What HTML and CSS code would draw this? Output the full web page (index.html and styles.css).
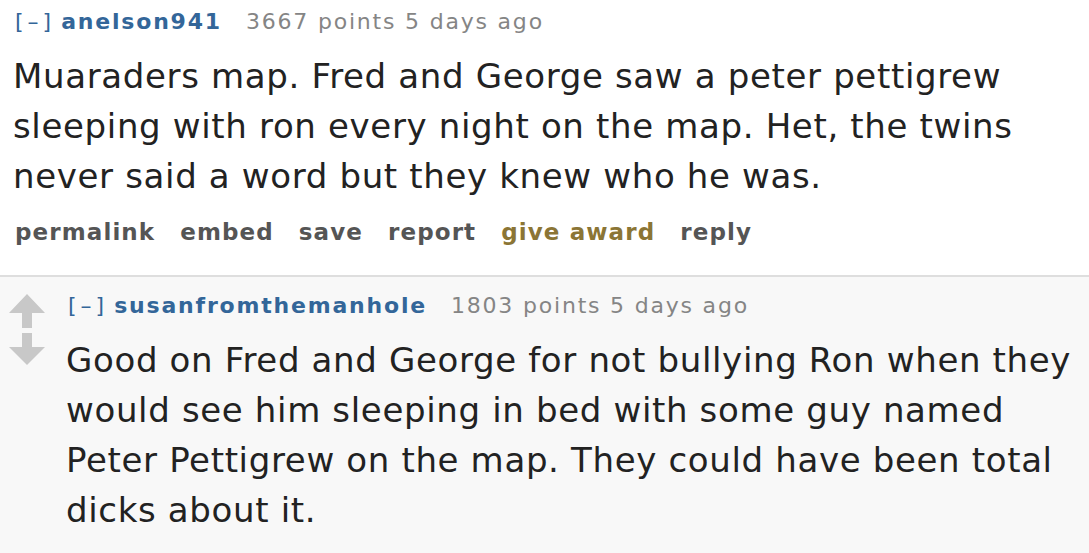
FILE: index.html
```html
<!DOCTYPE html>
<html>
<head>
<meta charset="utf-8">
<link rel="stylesheet" href="styles.css">
</head>
<body>
<div class="comment first">
  <div class="entry">
    <p class="tagline"><a class="expand">[–]</a><a class="author">anelson941</a><span class="score">3667 points 5 days ago</span></p>
    <div class="md">Muaraders map. Fred and George saw a peter pettigrew sleeping with ron every night on the map. Het, the twins never said a word but they knew who he was.</div>
    <ul class="buttons">
      <li>permalink</li>
      <li>embed</li>
      <li>save</li>
      <li>report</li>
      <li class="award">give award</li>
      <li>reply</li>
    </ul>
  </div>
</div>
<div class="comment second">
  <div class="midcol">
    <svg class="arrow" width="36" height="72" viewBox="0 0 36 72">
      <path d="M18 0 L36 19 L23 19 L23 34 L13 34 L13 19 L0 19 Z" fill="#c8c8c8"/>
      <path d="M13 39 L23 39 L23 53 L36 53 L18 71 L0 53 L13 53 Z" fill="#c8c8c8"/>
    </svg>
  </div>
  <div class="entry">
    <p class="tagline"><a class="expand">[–]</a><a class="author">susanfromthemanhole</a><span class="score">1803 points 5 days ago</span></p>
    <div class="md">Good on Fred and George for not bullying Ron when they would see him sleeping in bed with some guy named Peter Pettigrew on the map. They could have been total dicks about it.</div>
  </div>
</div>
</body>
</html>
```

FILE: styles.css
```css
html, body {
  margin: 0;
  padding: 0;
  background: #ffffff;
  font-family: "DejaVu Sans", Verdana, sans-serif;
}

.comment {
  display: flex;
}

.first {
  padding: 10px 0 0 13px;
  height: 277px;
  box-sizing: border-box;
  border-bottom: 2px solid #dedede;
}

.second {
  background: #f8f8f8;
  padding: 17px 0 0 9px;
  height: 276px;
  box-sizing: border-box;
}

.midcol {
  width: 57px;
  flex: none;
}

.arrow {
  display: block;
}

.entry {
  flex: 1;
  min-width: 0;
}

.tagline {
  margin: 0;
  font-size: 22px;
  line-height: 24px;
  color: #858585;
  white-space: nowrap;
}

.expand {
  color: #336699;
  font-weight: normal;
  letter-spacing: 4px;
  margin-left: 2px;
}

.author {
  color: #336699;
  font-weight: bold;
  letter-spacing: 1.8px;
  margin-left: 6px;
  margin-right: 24px;
}

.score {
  color: #858585;
  letter-spacing: 1.8px;
}

.md {
  margin-top: 17px;
  font-size: 34px;
  line-height: 50px;
  letter-spacing: 0.65px;
  color: #222222;
  padding-right: 10px;
}

.second .md {
  margin-top: 17px;
}

.buttons {
  list-style: none;
  margin: 16px 0 0 2px;
  padding: 0;
  display: flex;
  gap: 25px;
  font-size: 23px;
  font-weight: bold;
  line-height: 30px;
  letter-spacing: 1.1px;
  color: #555555;
}

.buttons .award {
  color: #8b7535;
}
```
